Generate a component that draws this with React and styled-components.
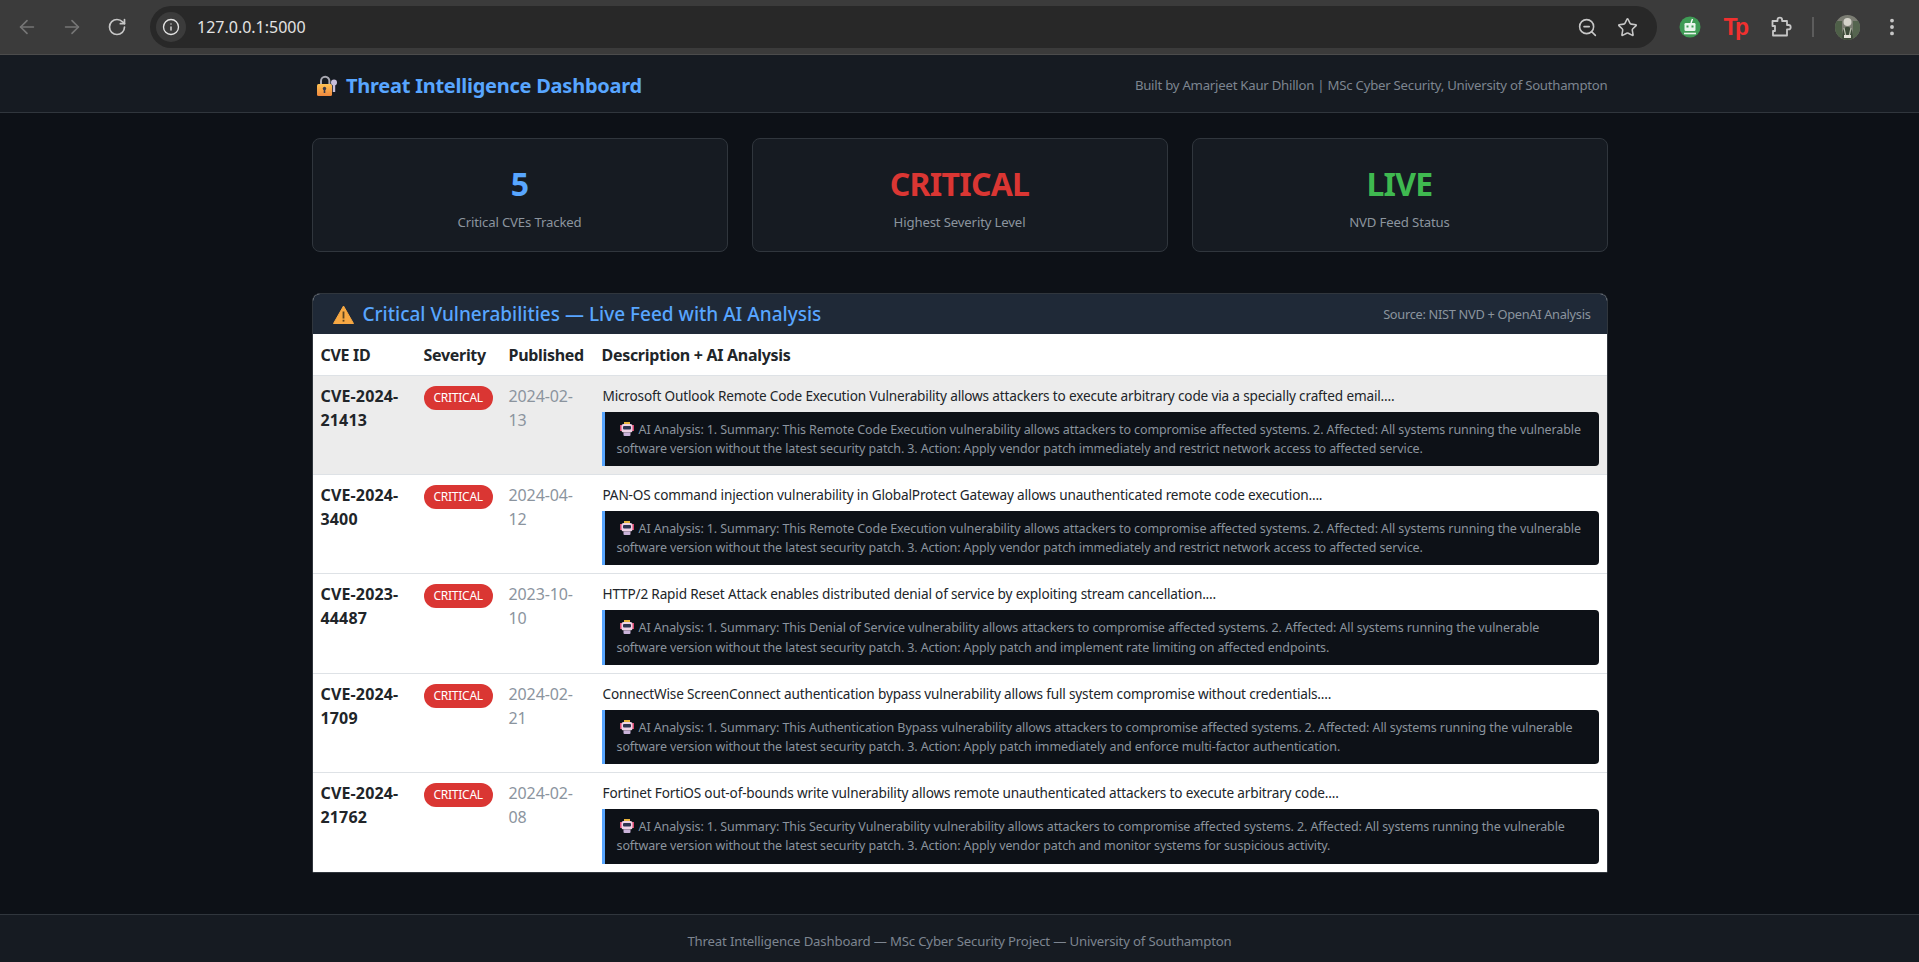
import React from 'react';
import styled, { createGlobalStyle } from 'styled-components';
import { ArrowLeft, ArrowRight, RotateCw, Info, ZoomOut, Star, MoreVertical } from 'lucide-react';

const GlobalStyle = createGlobalStyle`
  * {
    box-sizing: border-box;
  }
  body {
    margin: 0;
    background-color: #0d1117;
    color: #c9d1d9;
    font-family: 'Noto Sans', 'Open Sans', sans-serif;
    font-size: 16px;
    line-height: 1.5;
    overflow: hidden;
  }
`;

const Toolbar = styled.div`
  height: 55px;
  background-color: #3b3b3b;
  border-bottom: 1px solid #4c4c4c;
  display: flex;
  align-items: center;
  padding-left: 9px;
`;

const NavGroup = styled.div`
  display: flex;
  gap: 9px;
  margin-right: 15px;
`;

const NavButton = styled.div`
  width: 36px;
  height: 36px;
  display: flex;
  align-items: center;
  justify-content: center;
  color: ${(p) => (p.$dim ? '#767676' : '#c7c7c7')};
`;

const AddressBar = styled.div`
  flex: 1;
  height: 42px;
  border-radius: 21px;
  background-color: #282828;
  display: flex;
  align-items: center;
  padding: 0 19px 0 6px;
`;

const SiteInfo = styled.div`
  width: 30px;
  height: 30px;
  border-radius: 50%;
  background-color: #3b3b3b;
  color: #e3e3e3;
  display: flex;
  align-items: center;
  justify-content: center;
  margin-right: 11px;
`;

const Url = styled.span`
  flex: 1;
  color: #e3e3e3;
  font-size: 16px;
`;

const AddressActions = styled.div`
  display: flex;
  align-items: center;
  gap: 19px;
  color: #c7c7c7;
`;

const ToolbarRight = styled.div`
  width: 262px;
  padding-left: 22px;
  display: flex;
  align-items: center;
`;

const TpLogo = styled.span`
  width: 26px;
  margin-left: 21px;
  text-align: center;
  color: #f1302f;
  font-family: 'Liberation Sans', sans-serif;
  font-weight: 700;
  font-size: 23px;
  line-height: 1;
  letter-spacing: -2.5px;
`;

const PuzzleSlot = styled.div`
  display: flex;
  margin-left: 22px;
  color: #c7c7c7;
`;

const ToolbarDivider = styled.div`
  width: 2px;
  height: 20px;
  background-color: #5c5c5c;
  margin: 0 21px 0 20px;
`;

const KebabSlot = styled.div`
  display: flex;
  margin-left: 21px;
  color: #c7c7c7;
`;

const Navbar = styled.header`
  height: 58px;
  background-color: #161b22;
  border-bottom: 1px solid #30363d;
`;

const NavInner = styled.div`
  width: 1296px;
  height: 100%;
  margin: 0 auto;
  padding-top: 4px;
  display: flex;
  align-items: center;
  justify-content: space-between;
`;

const Brand = styled.div`
  display: flex;
  align-items: center;
  gap: 8.5px;
  padding-left: 4px;
  color: #58a6ff;
  font-size: 20px;
  font-weight: 700;
  letter-spacing: -0.25px;
`;

const Credit = styled.span`
  color: #7d8590;
  font-size: 13.2px;
  letter-spacing: -0.24px;
`;

const Page = styled.main`
  width: 1296px;
  margin: 0 auto;
  padding: 25px 0 41px;
`;

const StatGrid = styled.div`
  display: grid;
  grid-template-columns: repeat(3, 1fr);
  gap: 24px;
  margin-bottom: 41px;
`;

const StatCard = styled.div`
  height: 114px;
  background-color: #161b22;
  border: 1px solid #30363d;
  border-radius: 8px;
  display: flex;
  flex-direction: column;
  align-items: center;
  padding-top: 22px;
`;

const StatValue = styled.div`
  color: ${(p) => p.$color};
  font-size: 32px;
  font-weight: 700;
  line-height: 46px;
  letter-spacing: -0.75px;
`;

const StatLabel = styled.div`
  color: #8b949e;
  font-size: 13.2px;
  letter-spacing: -0.16px;
  line-height: 20px;
  margin-top: 5px;
`;

const FeedPanel = styled.section`
  border: 1px solid #30363d;
  border-radius: 8px 8px 2px 2px;
  overflow: hidden;
  background-color: #fff;
`;

const FeedHeader = styled.div`
  height: 40px;
  background-color: #1f2937;
  display: flex;
  align-items: center;
  justify-content: space-between;
  padding: 1px 16px 0 20px;
`;

const FeedTitle = styled.div`
  display: flex;
  align-items: center;
  gap: 9px;
  color: #58a6ff;
  font-size: 19px;
  font-weight: 500;
`;

const FeedSource = styled.span`
  color: #8b949e;
  font-size: 12.8px;
  letter-spacing: -0.3px;
`;

const CveTable = styled.table`
  width: 100%;
  table-layout: fixed;
  border-collapse: collapse;
  color: #212529;
`;

const HeadCell = styled.th`
  text-align: left;
  padding: 9px 8px 7px;
  height: 41px;
  font-size: 16px;
  font-weight: 700;
  letter-spacing: -0.3px;
  border-bottom: 1px solid #dee2e6;
`;

const Row = styled.tr`
  background-color: ${(p) => (p.$active ? '#ececec' : '#fff')};
  border-bottom: 1px solid #dee2e6;

  &:last-child {
    border-bottom: 0;
  }
`;

const Cell = styled.td`
  padding: 8px;
  vertical-align: top;
`;

const CveId = styled(Cell)`
  font-weight: 700;
  letter-spacing: 0.15px;
`;

const DateCell = styled(Cell)`
  color: #8b949e;
  letter-spacing: -0.1px;
`;

const SeverityBadge = styled.span`
  display: inline-block;
  height: 24px;
  line-height: 24px;
  padding: 0 10px;
  margin-top: 2px;
  border-radius: 12px;
  background-color: #da3633;
  color: #fff;
  font-size: 12px;
  letter-spacing: -0.25px;
  vertical-align: top;
`;

const Description = styled.span`
  margin-left: 1px;
  font-size: 13.6px;
  letter-spacing: -0.17px;
  vertical-align: 1px;
`;

const AiBox = styled.div`
  margin-top: 4px;
  padding: 8px 12px;
  background-color: #0d1117;
  border-left: 3px solid #58a6ff;
  border-radius: 0 4px 4px 0;
  color: #8b949e;
  font-size: 12.5px;
  letter-spacing: -0.1px;
  line-height: 19.2px;
`;

const RobotSlot = styled.span`
  display: inline-block;
  width: 14px;
  height: 14px;
  margin: 0 5px 0 3px;
  vertical-align: -2px;
`;

const Footer = styled.footer`
  height: 48px;
  padding-top: 7px;
  background-color: #161b22;
  border-top: 1px solid #30363d;
  display: flex;
  align-items: center;
  justify-content: center;
  color: #7d8590;
  font-size: 13.2px;
  letter-spacing: -0.17px;
`;

const BotBadge = () => (
  <svg width="22" height="22" viewBox="0 0 22 22">
    <circle cx="11" cy="11" r="10.5" fill="#3f9b55" />
    <path d="M12 7 L13.5 3" stroke="#fff" strokeWidth="1.4" />
    <rect x="5.5" y="7" width="11" height="8" rx="1.2" fill="#e9f5ec" />
    <rect x="7.5" y="9.5" width="2" height="2" fill="#3f9b55" />
    <rect x="12.5" y="9.5" width="2" height="2" fill="#3f9b55" />
    <path d="M5 17.5 H17" stroke="#e9f5ec" strokeWidth="1.6" />
  </svg>
);

const ExtensionsIcon = () => (
  <svg width="22" height="22" viewBox="0 0 22 22" fill="none" stroke="currentColor" strokeWidth="1.8" strokeLinejoin="round">
    <path d="M2.5 5 H7.5 V4 a2.3 2.3 0 0 1 4.6 0 V5 H17 V9 H18.5 a2.2 2.2 0 0 1 0 4.4 H17 V19.5 H3 V15 H5 V10 H2.5 Z" />
  </svg>
);

const Avatar = () => (
  <svg width="25" height="25" viewBox="0 0 25 25">
    <defs>
      <clipPath id="avatarClip">
        <circle cx="12.5" cy="12.5" r="12.5" />
      </clipPath>
    </defs>
    <g clipPath="url(#avatarClip)">
      <rect width="25" height="25" fill="#7b7d73" />
      <rect x="0" y="6" width="7" height="19" fill="#4e5f48" />
      <rect x="18" y="6" width="7" height="19" fill="#55654f" />
      <circle cx="12.5" cy="7" r="4" fill="#d4d3ca" />
      <path d="M7 25 C7 14 9 12 12.5 12 C16 12 18 14 18 25 Z" fill="#3c4a38" />
      <path d="M9 13 L11 22 M16 13 L14 22" stroke="#b9bfae" strokeWidth="1.2" />
      <rect x="9" y="20" width="7" height="3" fill="#e4e2da" />
    </g>
  </svg>
);

const LockKeyEmoji = () => (
  <svg width="22" height="22" viewBox="0 0 22 22">
    <defs>
      <linearGradient id="lockBody" x1="0" y1="0" x2="0" y2="1">
        <stop offset="0" stopColor="#fdc254" />
        <stop offset="1" stopColor="#f0883e" />
      </linearGradient>
    </defs>
    <path d="M5 10 V6 a4.2 4.2 0 0 1 8.4 0 V10" fill="none" stroke="#a9a9b2" strokeWidth="2" />
    <rect x="1" y="9" width="15" height="12" rx="1.5" fill="url(#lockBody)" />
    <circle cx="8.5" cy="13.5" r="1.7" fill="#3a3a4a" />
    <rect x="7.7" y="14" width="1.6" height="4" fill="#3a3a4a" />
    <circle cx="18" cy="7.5" r="3" fill="#c7bedb" />
    <rect x="16.8" y="9" width="2.4" height="8" fill="#c7bedb" />
  </svg>
);

const WarningEmoji = () => (
  <svg width="21" height="19" viewBox="0 0 21 19">
    <path d="M10.5 1 L20.5 18.5 H0.5 Z" fill="#f7a843" stroke="#f7a843" strokeLinejoin="round" />
    <rect x="9.6" y="6.5" width="1.8" height="7" fill="#5c4420" />
    <rect x="9.6" y="14.8" width="1.8" height="1.8" fill="#5c4420" />
  </svg>
);

const RobotEmoji = () => (
  <svg width="14" height="14" viewBox="0 0 14 14" style={{ display: 'block' }}>
    <rect x="4" y="0" width="6" height="2" fill="#e8b33c" />
    <rect x="0" y="3" width="2" height="6" fill="#d8476f" />
    <rect x="12" y="3" width="2" height="6" fill="#d8476f" />
    <rect x="1.5" y="2" width="11" height="8.5" rx="2" fill="#efd3e6" />
    <rect x="3" y="4" width="8" height="3.4" rx="1" fill="#2c3350" />
    <rect x="3.5" y="10.5" width="7" height="3.5" rx="1" fill="#c9b2d8" />
  </svg>
);

const cves = [
  {
    id: 'CVE-2024-21413',
    date: '2024-02-13',
    desc: 'Microsoft Outlook Remote Code Execution Vulnerability allows attackers to execute arbitrary code via a specially crafted email....',
    ai: 'AI Analysis: 1. Summary: This Remote Code Execution vulnerability allows attackers to compromise affected systems. 2. Affected: All systems running the vulnerable software version without the latest security patch. 3. Action: Apply vendor patch immediately and restrict network access to affected service.',
    active: true,
  },
  {
    id: 'CVE-2024-3400',
    date: '2024-04-12',
    desc: 'PAN-OS command injection vulnerability in GlobalProtect Gateway allows unauthenticated remote code execution....',
    ai: 'AI Analysis: 1. Summary: This Remote Code Execution vulnerability allows attackers to compromise affected systems. 2. Affected: All systems running the vulnerable software version without the latest security patch. 3. Action: Apply vendor patch immediately and restrict network access to affected service.',
  },
  {
    id: 'CVE-2023-44487',
    date: '2023-10-10',
    desc: 'HTTP/2 Rapid Reset Attack enables distributed denial of service by exploiting stream cancellation....',
    ai: 'AI Analysis: 1. Summary: This Denial of Service vulnerability allows attackers to compromise affected systems. 2. Affected: All systems running the vulnerable software version without the latest security patch. 3. Action: Apply patch and implement rate limiting on affected endpoints.',
  },
  {
    id: 'CVE-2024-1709',
    date: '2024-02-21',
    desc: 'ConnectWise ScreenConnect authentication bypass vulnerability allows full system compromise without credentials....',
    ai: 'AI Analysis: 1. Summary: This Authentication Bypass vulnerability allows attackers to compromise affected systems. 2. Affected: All systems running the vulnerable software version without the latest security patch. 3. Action: Apply patch immediately and enforce multi-factor authentication.',
  },
  {
    id: 'CVE-2024-21762',
    date: '2024-02-08',
    desc: 'Fortinet FortiOS out-of-bounds write vulnerability allows remote unauthenticated attackers to execute arbitrary code....',
    ai: 'AI Analysis: 1. Summary: This Security Vulnerability vulnerability allows attackers to compromise affected systems. 2. Affected: All systems running the vulnerable software version without the latest security patch. 3. Action: Apply vendor patch and monitor systems for suspicious activity.',
  },
];

const App = () => {
  return (
    <>
      <GlobalStyle />
      <Toolbar>
        <NavGroup>
          <NavButton $dim><ArrowLeft size={22} strokeWidth={1.8} /></NavButton>
          <NavButton $dim><ArrowRight size={22} strokeWidth={1.8} /></NavButton>
          <NavButton><RotateCw size={20} strokeWidth={2} /></NavButton>
        </NavGroup>
        <AddressBar>
          <SiteInfo><Info size={18} strokeWidth={1.8} /></SiteInfo>
          <Url>127.0.0.1:5000</Url>
          <AddressActions>
            <ZoomOut size={21} strokeWidth={1.8} />
            <Star size={21} strokeWidth={1.8} />
          </AddressActions>
        </AddressBar>
        <ToolbarRight>
          <BotBadge />
          <TpLogo>Tp</TpLogo>
          <PuzzleSlot><ExtensionsIcon /></PuzzleSlot>
          <ToolbarDivider />
          <Avatar />
          <KebabSlot><MoreVertical size={22} strokeWidth={2.2} /></KebabSlot>
        </ToolbarRight>
      </Toolbar>

      <Navbar>
        <NavInner>
          <Brand>
            <LockKeyEmoji />
            Threat Intelligence Dashboard
          </Brand>
          <Credit>Built by Amarjeet Kaur Dhillon | MSc Cyber Security, University of Southampton</Credit>
        </NavInner>
      </Navbar>

      <Page>
        <StatGrid>
          <StatCard>
            <StatValue $color="#58a6ff">5</StatValue>
            <StatLabel>Critical CVEs Tracked</StatLabel>
          </StatCard>
          <StatCard>
            <StatValue $color="#da3633">CRITICAL</StatValue>
            <StatLabel>Highest Severity Level</StatLabel>
          </StatCard>
          <StatCard>
            <StatValue $color="#3fb950">LIVE</StatValue>
            <StatLabel>NVD Feed Status</StatLabel>
          </StatCard>
        </StatGrid>

        <FeedPanel>
          <FeedHeader>
            <FeedTitle>
              <WarningEmoji />
              Critical Vulnerabilities — Live Feed with AI Analysis
            </FeedTitle>
            <FeedSource>Source: NIST NVD + OpenAI Analysis</FeedSource>
          </FeedHeader>
          <CveTable>
            <colgroup>
              <col style={{ width: 103 }} />
              <col style={{ width: 85 }} />
              <col style={{ width: 93 }} />
              <col />
            </colgroup>
            <thead>
              <tr>
                <HeadCell>CVE ID</HeadCell>
                <HeadCell>Severity</HeadCell>
                <HeadCell>Published</HeadCell>
                <HeadCell>Description + AI Analysis</HeadCell>
              </tr>
            </thead>
            <tbody>
              {cves.map((cve) => (
                <Row key={cve.id} $active={cve.active}>
                  <CveId>{cve.id}</CveId>
                  <Cell><SeverityBadge>CRITICAL</SeverityBadge></Cell>
                  <DateCell>{cve.date}</DateCell>
                  <Cell>
                    <Description>{cve.desc}</Description>
                    <AiBox>
                      <RobotSlot><RobotEmoji /></RobotSlot>
                      {cve.ai}
                    </AiBox>
                  </Cell>
                </Row>
              ))}
            </tbody>
          </CveTable>
        </FeedPanel>
      </Page>

      <Footer>Threat Intelligence Dashboard — MSc Cyber Security Project — University of Southampton</Footer>
    </>
  );
};

export default App;
